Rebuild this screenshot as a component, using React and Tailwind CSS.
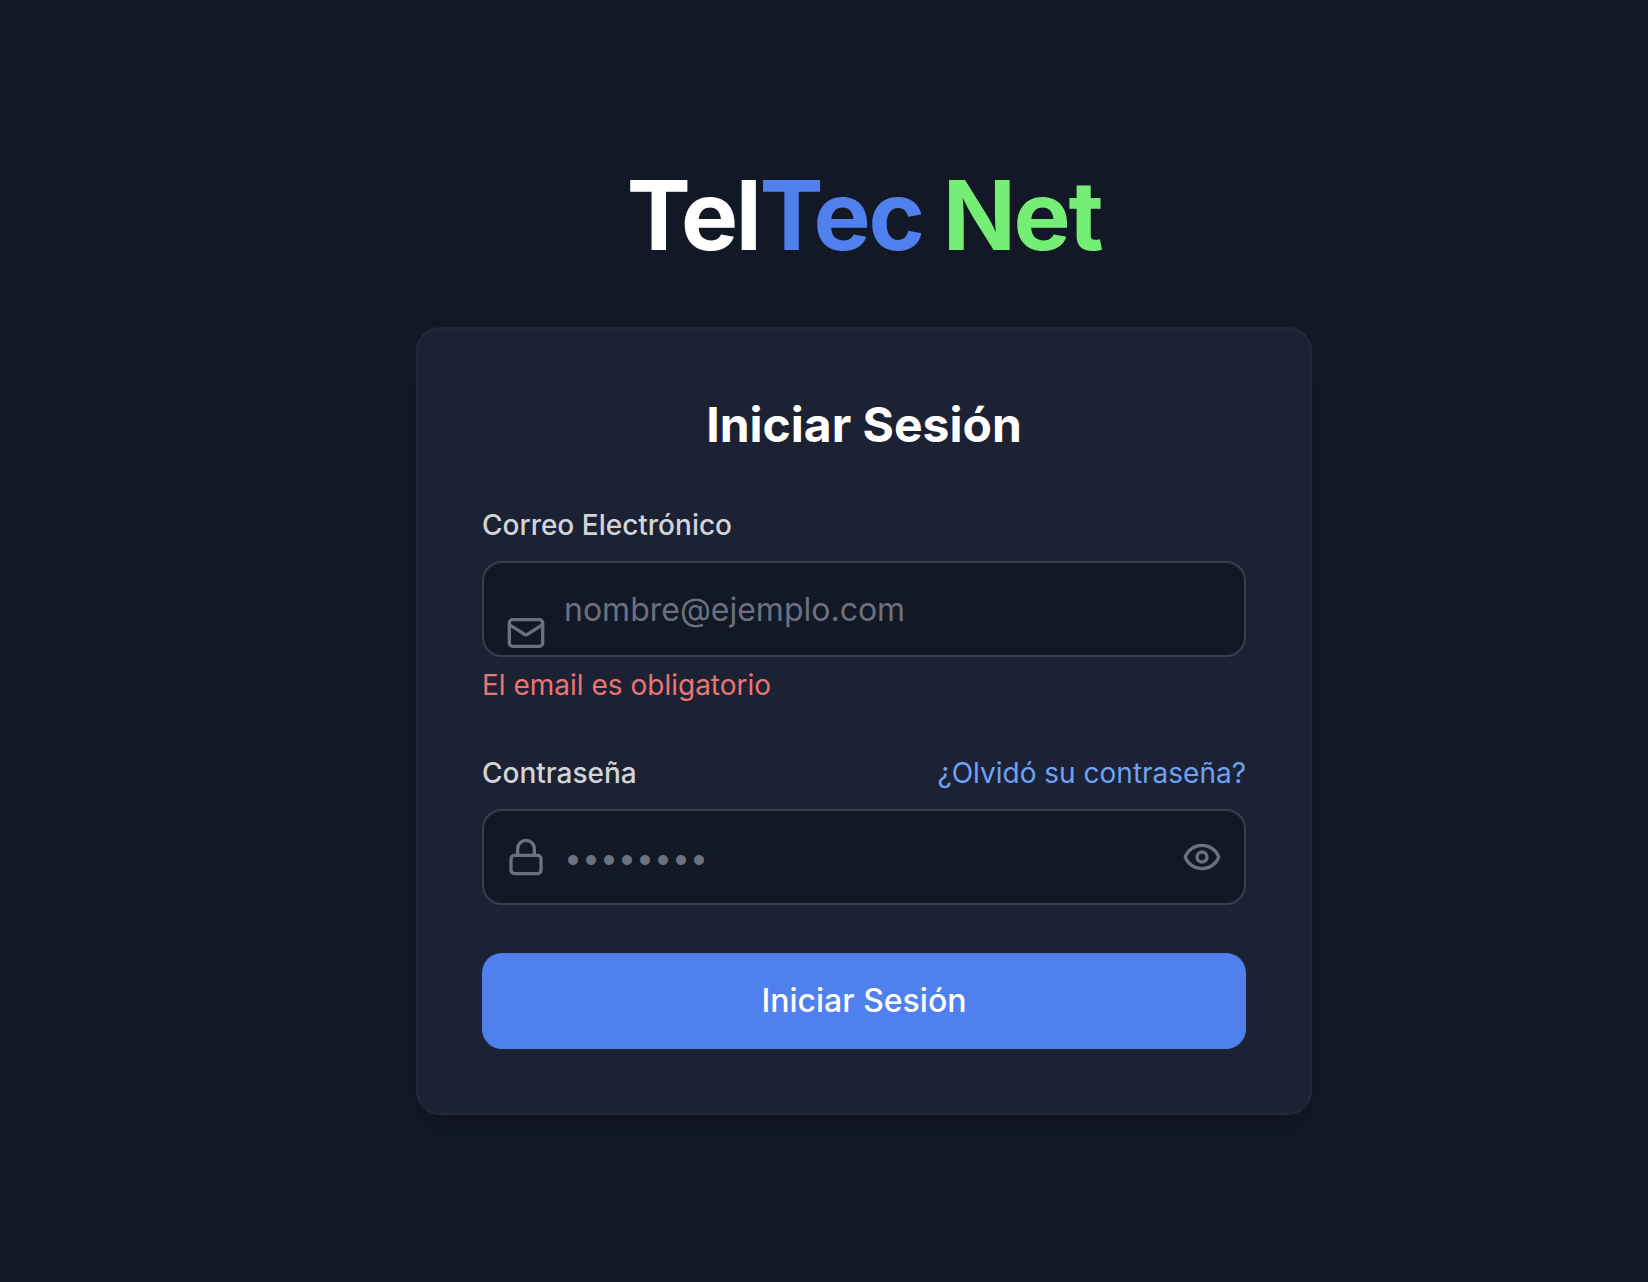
import { useState } from "react";
import { Mail, Lock, Eye } from "lucide-react";

const fieldClass =
  "block h-24 w-full rounded-[20px] border-2 border-[#374050] bg-[#121825] pl-20 text-[32px] leading-[48px] text-white placeholder:text-[#6b7180] placeholder:opacity-100 outline-none focus:border-[#4f80ee]";

export default function App() {
  const [visible, setVisible] = useState(false);

  return (
    <main className="flex min-h-screen flex-col items-center justify-center bg-[#121825] pl-20 font-['Inter',sans-serif] antialiased">
      <div className="w-full max-w-4xl">
        <h1 className="mb-16 text-center text-8xl leading-none font-bold tracking-tight text-white">
          Tel<span className="text-[#4f80ee]">Tec</span>
          <span className="text-[#74ee74]"> Net</span>
        </h1>

        <section className="rounded-3xl border-2 border-[#212936] bg-[#1c2133] p-16 shadow-[0_40px_50px_-10px_rgba(0,0,0,0.07),0_16px_20px_-12px_rgba(0,0,0,0.07)]">
          <h2 className="mb-12 text-center text-5xl leading-[64px] font-bold text-white">Iniciar Sesión</h2>

          <form className="flex flex-col gap-12" noValidate onSubmit={(e) => e.preventDefault()}>
            <div>
              <label htmlFor="email" className="mb-4 block text-[28px] leading-10 font-medium text-[#d1d5da]">
                Correo Electrónico
              </label>
              <div className="relative">
                <div className="pointer-events-none absolute inset-y-0 left-0 flex items-center pl-6 text-[#6b7180]">
                  <Mail size={40} />
                </div>
                <input
                  id="email"
                  type="email"
                  placeholder="nombre@ejemplo.com"
                  aria-invalid="true"
                  aria-describedby="email-error"
                  className={`${fieldClass} pr-6`}
                />
                <p id="email-error" className="mt-2 text-[28px] leading-10 text-[#e87673]">
                  El email es obligatorio
                </p>
              </div>
            </div>

            <div>
              <div className="mb-4 flex items-center justify-between text-[28px] leading-10">
                <label htmlFor="password" className="font-medium text-[#d1d5da]">
                  Contraseña
                </label>
                <a href="#recuperar" className="text-[#6ea2f5]">
                  ¿Olvidó su contraseña?
                </a>
              </div>
              <div className="relative">
                <div className="pointer-events-none absolute inset-y-0 left-0 flex items-center pl-6 text-[#6b7180]">
                  <Lock size={40} />
                </div>
                <input
                  id="password"
                  type={visible ? "text" : "password"}
                  placeholder="••••••••"
                  className={`${fieldClass} pr-20`}
                />
                <button
                  type="button"
                  aria-label="Mostrar contraseña"
                  onClick={() => setVisible(!visible)}
                  className="absolute inset-y-0 right-0 flex items-center pr-6 text-[#6b7180]"
                >
                  <Eye size={40} />
                </button>
              </div>
            </div>

            <button
              type="submit"
              className="h-24 w-full rounded-[20px] bg-[#4f80ee] text-[32px] leading-[48px] font-medium text-white"
            >
              Iniciar Sesión
            </button>
          </form>
        </section>
      </div>
    </main>
  );
}
